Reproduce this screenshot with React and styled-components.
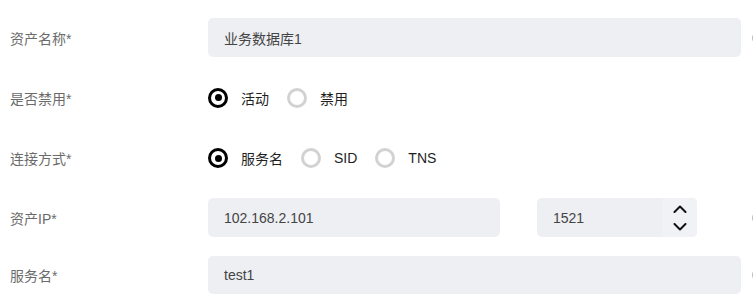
import React from 'react';
import styled, { createGlobalStyle } from 'styled-components';

const GlobalStyle = createGlobalStyle`
  html, body {
    margin: 0;
    padding: 0;
    background: #fff;
    overflow: hidden;
  }
  body {
    font-family: "Liberation Sans", "Noto Sans CJK SC", sans-serif;
    font-size: 14px;
  }
`;

const Form = styled.div`
  width: 780px;
  padding-top: 18px;
  display: flex;
  flex-direction: column;
  gap: 20px;
`;

const Row = styled.div`
  display: grid;
  grid-template-columns: 208px 533px 11px 20px;
  align-items: center;
  height: ${(p) => p.$h || 39}px;
  margin-top: ${(p) => p.$mt || 0}px;
`;

const Label = styled.div`
  padding-left: 10px;
  color: #6b6b6b;
  font-size: 14px;
`;

const Field = styled.div`
  display: flex;
  align-items: center;
  gap: ${(p) => p.$gap || 0}px;
`;

const Input = styled.div`
  box-sizing: border-box;
  height: ${(p) => p.$h || 39}px;
  width: ${(p) => (p.$w ? `${p.$w}px` : '100%')};
  background: #edeff3;
  border-radius: 5px;
  padding-left: 16px;
  display: flex;
  align-items: center;
  color: #444;
  font-size: 14px;
  overflow: hidden;
`;

const NumberText = styled.span`
  flex: 1;
`;

const Spinner = styled.div`
  width: 35px;
  align-self: stretch;
  background: #f0f2f5;
  display: flex;
  flex-direction: column;
  align-items: center;
  justify-content: center;
  gap: 10px;
`;

const RadioGroup = styled.div`
  display: flex;
  align-items: center;
`;

const RadioItem = styled.label`
  display: flex;
  align-items: center;
  margin-right: 18px;
  color: #1f1f1f;
  font-size: 14px;
`;

const Dot = styled.span`
  box-sizing: border-box;
  width: 20px;
  height: 20px;
  border-radius: 50%;
  border: ${(p) => (p.$on ? '3.5px solid #000' : '3px solid #d2d2d2')};
  display: flex;
  align-items: center;
  justify-content: center;
  margin-right: 13px;

  &::after {
    content: '';
    width: 7px;
    height: 7px;
    border-radius: 50%;
    background: ${(p) => (p.$on ? '#000' : 'transparent')};
  }
`;

const Help = styled.span`
  grid-column: 4;
  box-sizing: border-box;
  width: 14px;
  height: 14px;
  border-radius: 50%;
  border: 1.5px solid #b8b8b8;
`;

function Chevron({ up }) {
  return (
    <svg width="14" height="8" viewBox="0 0 14 8">
      <path
        d={up ? 'M1.5 7 L7 1.5 L12.5 7' : 'M1.5 1 L7 6.5 L12.5 1'}
        fill="none"
        stroke="#111"
        strokeWidth="2"
        strokeLinecap="round"
        strokeLinejoin="round"
      />
    </svg>
  );
}

function Radio({ on, children }) {
  return (
    <RadioItem>
      <Dot $on={on} />
      {children}
    </RadioItem>
  );
}

export default function App() {
  return (
    <>
      <GlobalStyle />
      <Form>
        <Row>
          <Label>资产名称*</Label>
          <Input>业务数据库1</Input>
          <span />
          <Help />
        </Row>
        <Row $h={41}>
          <Label>是否禁用*</Label>
          <RadioGroup>
            <Radio on>活动</Radio>
            <Radio>禁用</Radio>
          </RadioGroup>
        </Row>
        <Row $h={40}>
          <Label>连接方式*</Label>
          <RadioGroup>
            <Radio on>服务名</Radio>
            <Radio>SID</Radio>
            <Radio>TNS</Radio>
          </RadioGroup>
        </Row>
        <Row>
          <Label>资产IP*</Label>
          <Field $gap={37}>
            <Input $w={292}>102.168.2.101</Input>
            <Input $w={160}>
              <NumberText>1521</NumberText>
              <Spinner>
                <Chevron up />
                <Chevron />
              </Spinner>
            </Input>
          </Field>
          <span />
          <Help />
        </Row>
        <Row $h={38} $mt={-1}>
          <Label>服务名*</Label>
          <Input $h={38}>test1</Input>
          <span />
          <Help />
        </Row>
      </Form>
    </>
  );
}
